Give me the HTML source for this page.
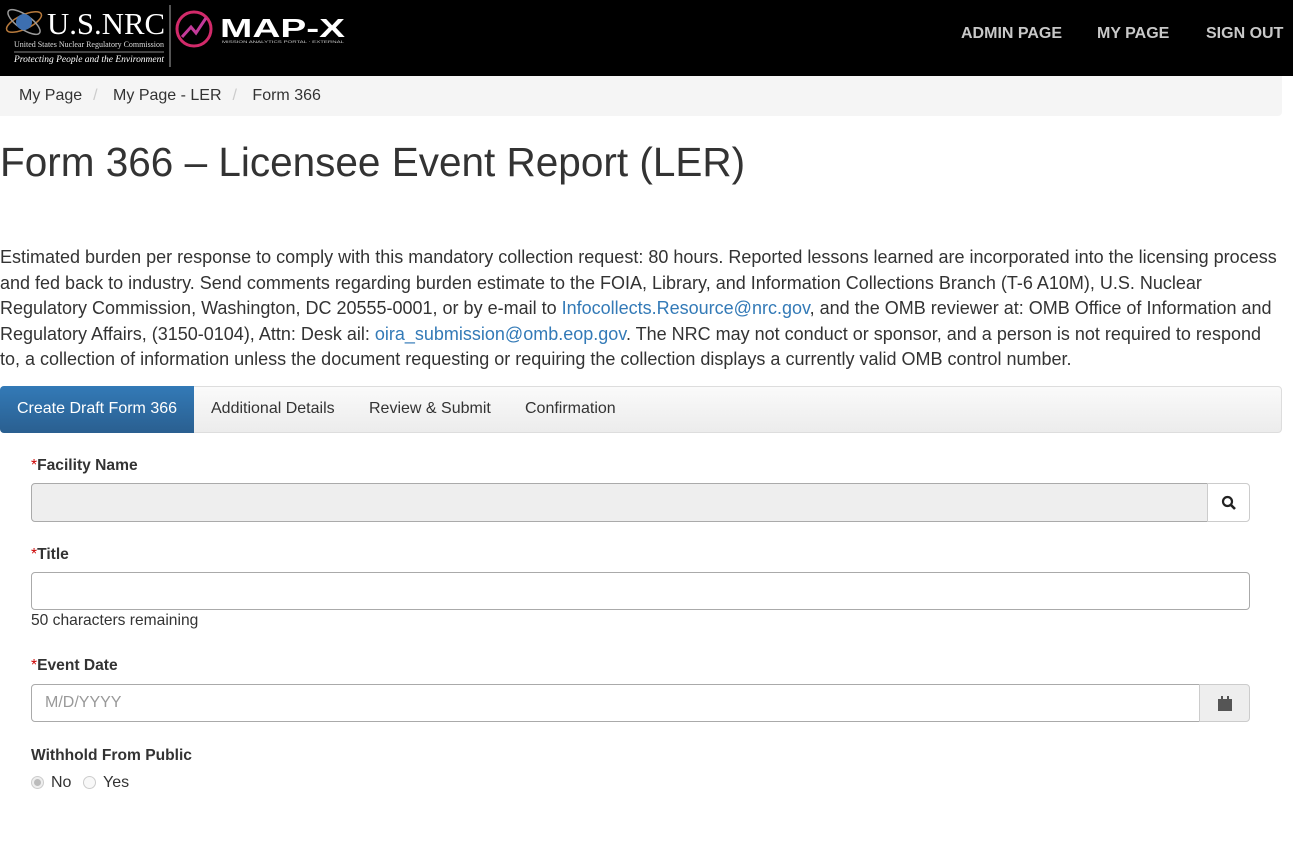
<!DOCTYPE html>
<html><head><meta charset="utf-8"><style>
*{box-sizing:border-box}
body{margin:0;width:1293px;height:851px;overflow:hidden;background:#fff;font-family:"Liberation Sans",Arial,sans-serif;color:#333}
.hdr{height:76px;background:#000;position:relative}
.nav{position:absolute;top:25px;font-size:16px;font-weight:bold;color:#c8c8c8}
.bc{position:absolute;top:76px;left:0;width:1282px;height:40px;background:#f5f5f5;border-radius:0 0 4px 0;font-size:16px;padding:11px 0 0 19px;color:#333}
.bc span.s{color:#ccc;padding:0 11px}
h1{position:absolute;top:139px;left:0;margin:0;font-weight:normal;font-size:40.5px;color:#333}
p{position:absolute;top:245px;left:0;width:1285px;margin:0;font-size:18px;line-height:25.6px}
a{color:#337ab7;text-decoration:none}
.tabs{position:absolute;top:386px;left:0;width:1282px;height:47px;background:linear-gradient(#fafafa,#ececec);border:1px solid #ddd;border-radius:4px;font-size:16px}
.tab{position:absolute;top:0;height:45px;line-height:43px}
.act{left:-1px;width:194px;height:47px;top:-1px;background:linear-gradient(#337ab7,#2a5f90);color:#fff;text-align:center;border-radius:4px 0 0 4px;line-height:45px}
.lbl{position:absolute;left:31px;font-weight:bold;font-size:15.6px}
.lbl i{color:#c00;font-style:normal;font-weight:normal}
.inp{position:absolute;left:31px;border:1px solid #aaa;border-radius:4px;background:#fff}
.btn{position:absolute;border:1px solid #ccc;border-radius:0 4px 4px 0}
.r{position:absolute;top:776px;width:13px;height:13px;border:1px solid #ccc;border-radius:50%}
</style></head><body>
<div class="hdr">
<svg width="360" height="72" style="position:absolute;left:0;top:0">
<ellipse cx="24" cy="22" rx="19" ry="7" fill="none" stroke="#b87a3c" stroke-width="1.5" transform="rotate(-25 24 22)"/>
<ellipse cx="24" cy="22" rx="19" ry="7" fill="none" stroke="#9a9a9a" stroke-width="1.5" transform="rotate(35 24 22)"/>
<circle cx="24" cy="22" r="8" fill="#3d6fb0"/>
<text x="47" y="34" font-family="Liberation Serif" font-size="31" fill="#fff" textLength="118" lengthAdjust="spacingAndGlyphs">U.S.NRC</text>
<text x="14" y="47" font-family="Liberation Serif" font-size="8" fill="#ddd" textLength="150" lengthAdjust="spacingAndGlyphs">United States Nuclear Regulatory Commission</text>
<line x1="14" y1="52" x2="164" y2="52" stroke="#888"/>
<text x="14" y="62" font-family="Liberation Serif" font-style="italic" font-size="9.5" fill="#fff" textLength="150" lengthAdjust="spacingAndGlyphs">Protecting People and the Environment</text>
<line x1="170" y1="5" x2="170" y2="67" stroke="#aaa"/>
<circle cx="194" cy="29" r="17" fill="none" stroke="#d22a6a" stroke-width="3"/>
<polyline points="182,37 191,27 196,33 206,18" fill="none" stroke="#c43a9a" stroke-width="3"/>
<text x="220" y="37" font-family="Liberation Sans" font-weight="bold" font-size="26" fill="#fff" textLength="125" lengthAdjust="spacingAndGlyphs">MAP-X</text>
<text x="222" y="43" font-size="4" fill="#ccc" textLength="122" lengthAdjust="spacingAndGlyphs">MISSION ANALYTICS PORTAL · EXTERNAL</text>
</svg>
<span class="nav" style="left:961px">ADMIN PAGE</span>
<span class="nav" style="left:1097px">MY PAGE</span>
<span class="nav" style="left:1206px">SIGN OUT</span>
</div>
<div class="bc">My Page<span class="s">/</span> My Page - LER<span class="s">/</span> Form 366</div>
<h1>Form 366 – Licensee Event Report (LER)</h1>
<p>Estimated burden per response to comply with this mandatory collection request: 80 hours. Reported lessons learned are incorporated into the licensing process and fed back to industry. Send comments regarding burden estimate to the FOIA, Library, and Information Collections Branch (T-6 A10M), U.S. Nuclear Regulatory Commission, Washington, DC 20555-0001, or by e-mail to <a>Infocollects.Resource@nrc.gov</a>, and the OMB reviewer at: OMB Office of Information and Regulatory Affairs, (3150-0104), Attn: Desk ail: <a>oira_submission@omb.eop.gov</a>. The NRC may not conduct or sponsor, and a person is not required to respond to, a collection of information unless the document requesting or requiring the collection displays a currently valid OMB control number.</p>
<div class="tabs">
<div class="tab act">Create Draft Form 366</div>
<div class="tab" style="left:210px">Additional Details</div>
<div class="tab" style="left:368px">Review &amp; Submit</div>
<div class="tab" style="left:524px">Confirmation</div>
</div>
<div class="lbl" style="top:457px"><i>*</i>Facility Name</div>
<div class="inp" style="top:483px;width:1177px;height:39px;background:#eee;border-radius:4px 0 0 4px"></div>
<div class="btn" style="left:1207px;top:483px;width:43px;height:39px;background:#fff">
<svg width="16" height="16" style="position:absolute;left:13px;top:11px"><circle cx="6.5" cy="6.5" r="4.5" fill="none" stroke="#222" stroke-width="2.2"/><line x1="10" y1="10" x2="14" y2="14" stroke="#222" stroke-width="2.6"/></svg></div>
<div class="lbl" style="top:546px"><i>*</i>Title</div>
<div class="inp" style="top:572px;width:1219px;height:38px"></div>
<div style="position:absolute;left:31px;top:612px;font-size:15.6px">50 characters remaining</div>
<div class="lbl" style="top:657px"><i>*</i>Event Date</div>
<div class="inp" style="top:684px;width:1169px;height:38px;border-radius:4px 0 0 4px;padding:9px 13px;font-size:16px;color:#999">M/D/YYYY</div>
<div class="btn" style="left:1199px;top:684px;width:51px;height:38px;background:#eee">
<svg width="14" height="16" style="position:absolute;left:18px;top:11px"><rect x="0" y="3" width="14" height="12" fill="#555"/><rect x="3" y="0" width="2" height="4" fill="#555"/><rect x="9" y="0" width="2" height="4" fill="#555"/></svg></div>
<div class="lbl" style="top:747px">Withhold From Public</div>
<div class="r" style="left:31px;background:#eee"><span style="position:absolute;left:2px;top:2px;width:7px;height:7px;border-radius:50%;background:#bbb"></span></div>
<div style="position:absolute;left:51px;top:774px;font-size:16px">No</div>
<div class="r" style="left:83px;background:#f8f8f8"></div>
<div style="position:absolute;left:103px;top:774px;font-size:16px">Yes</div>
</body></html>
